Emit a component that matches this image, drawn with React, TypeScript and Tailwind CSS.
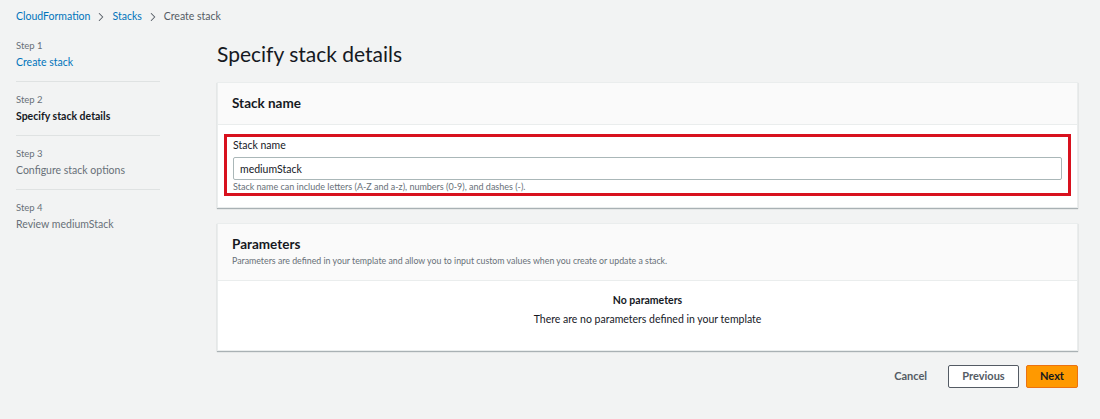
import { ChevronRight } from 'lucide-react';

const font = { fontFamily: 'Lato, Roboto, Arial, sans-serif' };

const steps = [
  { step: 'Step 1', label: 'Create stack', state: 'link' },
  { step: 'Step 2', label: 'Specify stack details', state: 'active' },
  { step: 'Step 3', label: 'Configure stack options', state: 'todo' },
  { step: 'Step 4', label: 'Review mediumStack', state: 'todo' },
];

function Sidebar() {
  return (
    <nav className="w-[144px] shrink-0">
      {steps.map((s, i) => (
        <div
          key={s.step}
          className={`flex flex-col ${i === 0 ? 'pt-0' : 'pt-[11px]'} pb-[11px] ${i < steps.length - 1 ? 'border-b border-[#dfe2e2]' : ''}`}
        >
          <span className="text-[9.5px] leading-[14px] text-[#687078]">{s.step}</span>
          <span
            className={`text-[10.5px] leading-[16px] mt-[1px] ${
              s.state === 'link'
                ? 'text-[#0073bb]'
                : s.state === 'active'
                ? 'text-[#16191f] font-bold'
                : 'text-[#687078]'
            }`}
          >
            {s.label}
          </span>
        </div>
      ))}
    </nav>
  );
}

export default function App() {
  return (
    <div className="w-[1100px] h-[419px] bg-[#f2f3f3] text-[#16191f] overflow-hidden" style={font}>
      {/* Breadcrumb */}
      <div className="flex items-center h-[34px] pl-[16px] text-[10.5px]">
        <span className="text-[#0073bb]">CloudFormation</span>
        <ChevronRight className="w-[14px] h-[14px] mx-[4px] text-[#545b64]" strokeWidth={1.8} />
        <span className="text-[#0073bb]">Stacks</span>
        <ChevronRight className="w-[14px] h-[14px] mx-[4px] text-[#545b64]" strokeWidth={1.8} />
        <span className="text-[#545b64]">Create stack</span>
      </div>

      <div className="flex pl-[16px] pr-[22px] pt-[5px]">
        <Sidebar />

        <main className="flex-1 ml-[57px] -mt-[1px]">
          <h1 className="text-[21px] leading-[28px] font-normal text-[#16191f] mt-[2px]">
            Specify stack details
          </h1>

          {/* Stack name card */}
          <section className="mt-[14px] bg-white border border-[#eaeded] shadow-[0_1px_1px_rgba(0,28,36,0.3)]">
            <div className="bg-[#fafafa] border-b border-[#eaeded] h-[42px] flex items-center px-[14px]">
              <h2 className="text-[13.5px] font-bold">Stack name</h2>
            </div>
            <div className="px-[6px] pt-[9px] pb-[11px]">
              <div className="border-[3px] border-[#d8111e] px-[6px]">
                <div className="text-[10.5px] leading-[17px] text-[#16191f]">Stack name</div>
                <input
                  readOnly
                  value="mediumStack"
                  className="mt-[3px] w-full h-[23px] border border-[#aab7b8] rounded-[2px] px-[6px] text-[10.5px] text-[#16191f] outline-none"
                  style={font}
                />
                <div className="text-[9px] leading-[12px] text-[#687078] mt-[1px]">
                  Stack name can include letters (A-Z and a-z), numbers (0-9), and dashes (-).
                </div>
              </div>
            </div>
          </section>

          {/* Parameters card */}
          <section className="mt-[15px] bg-white border border-[#eaeded] shadow-[0_1px_1px_rgba(0,28,36,0.3)]">
            <div className="bg-[#fafafa] border-b border-[#eaeded] h-[57px] flex flex-col justify-center px-[14px]">
              <h2 className="text-[13.5px] font-bold leading-[17px]">Parameters</h2>
              <p className="text-[8.8px] leading-[14px] text-[#687078] mt-[1px]">
                Parameters are defined in your template and allow you to input custom values when you create or update a stack.
              </p>
            </div>
            <div className="h-[69px] flex flex-col items-center pt-[11px]">
              <div className="text-[10.5px] font-bold text-[#16191f] leading-[16px]">No parameters</div>
              <div className="text-[10.5px] text-[#16191f] leading-[16px] mt-[3px]">
                There are no parameters defined in your template
              </div>
            </div>
          </section>

          {/* Actions */}
          <div className="flex justify-end items-center mt-[14px] gap-[7px]">
            <button className="text-[11px] font-bold text-[#545b64] h-[23px] mr-[14px]">Cancel</button>
            <button className="text-[11px] font-bold text-[#545b64] bg-white border border-[#545b64] rounded-[2px] w-[71px] h-[23px]">
              Previous
            </button>
            <button className="text-[11px] font-bold text-[#16191f] bg-[#ff9900] border border-[#ec7211] rounded-[2px] w-[52px] h-[23px]">
              Next
            </button>
          </div>
        </main>
      </div>
    </div>
  );
}
